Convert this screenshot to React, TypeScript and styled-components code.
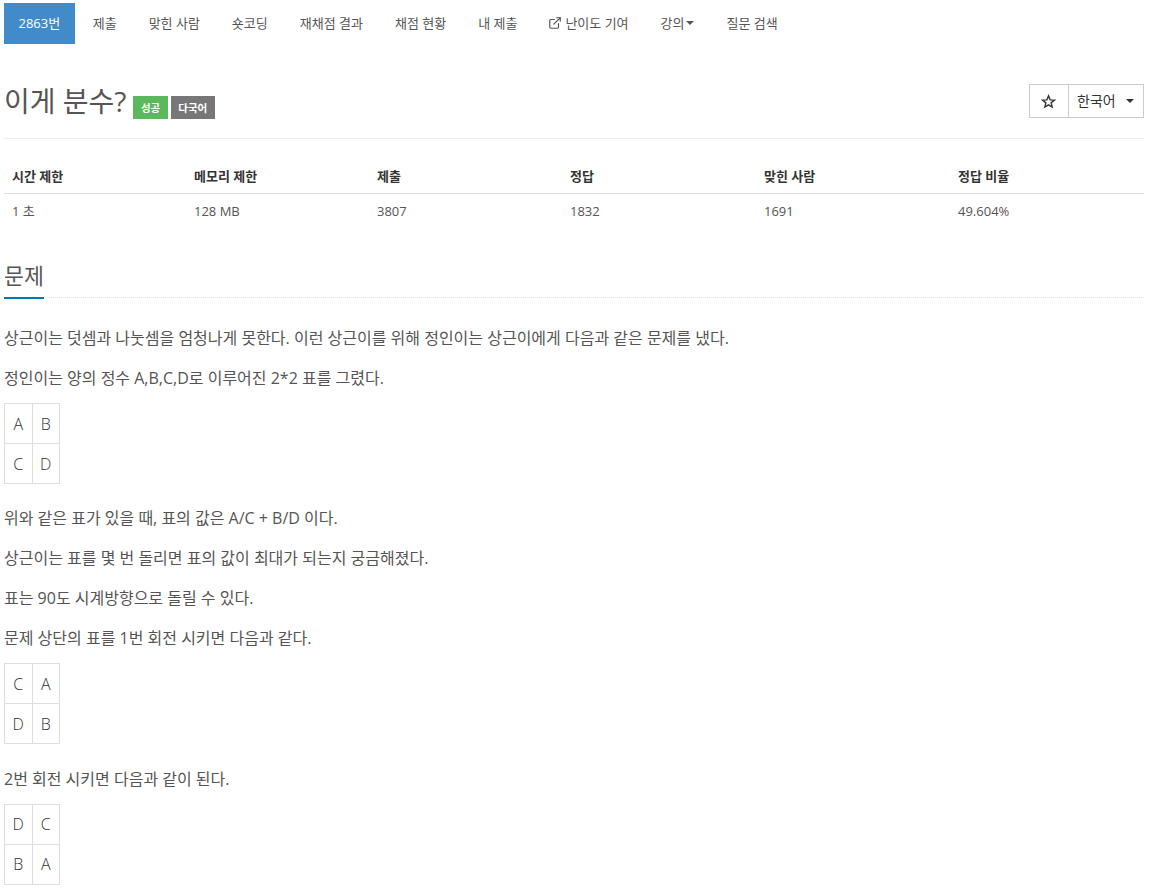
import React from "react";
import styled, { createGlobalStyle } from "styled-components";
import { ExternalLink } from "lucide-react";

const Global = createGlobalStyle`
  html, body { margin: 0; padding: 0; background: #fff; }
  body { font-family: "Open Sans", "Noto Sans CJK KR", sans-serif; color: #555; font-size: 13px; line-height: 20px; }
`;

const Page = styled.div`
  padding: 3px 5px 0 4px;
`;
const Nav = styled.nav`
  display: flex;
  gap: 2px;
  height: 41px;
`;
const NavItem = styled.a<{ $active?: boolean }>`
  display: flex;
  align-items: center;
  gap: 3px;
  box-sizing: border-box;
  height: 41px;
  padding: 0 ${(p) => (p.$active ? "14.5px" : "15px")} 2px;
  margin-right: ${(p) => (p.$active ? "1px" : "0")};
  font-size: 13px;
  color: ${(p) => (p.$active ? "#fff" : "#555")};
  background: ${(p) => (p.$active ? "#428bca" : "transparent")};
`;
const LinkIcon = styled(ExternalLink)`
  margin-left: -1px;
`;
const Caret = styled.span`
  width: 0;
  height: 0;
  border-top: 4px solid #555;
  border-left: 4px solid transparent;
  border-right: 4px solid transparent;
  margin: 0 1px 0 -2px;
`;
const Header = styled.header`
  display: flex;
  justify-content: space-between;
  margin-top: 40px;
  padding-bottom: 19px;
  border-bottom: 1px solid #eee;
  height: 35px;
`;
const TitleRow = styled.div`
  display: flex;
  align-items: flex-end;
`;
const Title = styled.h1`
  margin: 0;
  font-size: 28px;
  font-weight: 400;
  line-height: 36px;
  color: #555;
`;
const Label = styled.span<{ $bg: string }>`
  display: flex;
  align-items: center;
  justify-content: center;
  height: 23px;
  padding: 0 7.5px;
  margin-left: 3px;
  font-size: 10.5px;
  font-weight: 700;
  color: #fff;
  background: ${(p) => p.$bg};
`;
const FirstLabel = styled(Label)`
  margin-left: 7px;
`;
const ButtonGroup = styled.div`
  display: flex;
  height: 34px;
`;
const GroupButton = styled.div`
  display: flex;
  align-items: center;
  box-sizing: border-box;
  height: 34px;
  border: 1px solid #ccc;
  color: #333;
  font-size: 14px;
`;
const StarButton = styled(GroupButton)`
  width: 40px;
  padding-right: 2px;
  justify-content: center;
`;
const LangButton = styled(GroupButton)`
  width: 76px;
  margin-left: -1px;
  padding-left: 8px;
  gap: 10px;
`;
const DarkCaret = styled(Caret)`
  border-top-color: #333;
  margin: 0;
`;
const Stats = styled.table`
  width: 100%;
  margin-top: 20px;
  border-collapse: collapse;
  table-layout: fixed;
  font-size: 13px;
`;
const Th = styled.th<{ $w: number }>`
  box-sizing: border-box;
  width: ${(p) => p.$w}px;
  text-align: left;
  padding: 7px 8px 7px;
  color: #333;
  font-weight: 700;
  border-bottom: 1px solid #ddd;
`;
const Td = styled.td`
  padding: 7px 8px 8px;
  color: #555;
`;
const SectionHead = styled.div`
  margin-top: 32px;
  height: 36px;
  border-bottom: 1px dotted #e4e4e4;
`;
const SectionTitle = styled.h2`
  display: inline-block;
  margin: 0;
  box-sizing: border-box;
  height: 38px;
  line-height: 30px;
  font-size: 21.7px;
  font-weight: 400;
  color: #555;
  border-bottom: 2px solid #0076c0;
`;
const Body = styled.div`
  margin-top: 28px;
  font-size: 16px;
  line-height: 24px;
  color: #555;
`;
const P = styled.p`
  margin: 0 0 16px;
`;
const Grid = styled.table`
  border-collapse: collapse;
  margin: -3px 0 22.4px;
  font-size: 16px;
  font-weight: 300;
  color: #333;
`;
const Cell = styled.td`
  box-sizing: border-box;
  width: 27.5px;
  height: 40px;
  padding: 0;
  text-align: center;
  border: 1px solid #ddd;
`;

const navItems = ["제출", "맞힌 사람", "숏코딩", "재채점 결과", "채점 현황", "내 제출"];
const stats: [string, string, number][] = [
  ["시간 제한", "1 초", 182],
  ["메모리 제한", "128 MB", 183],
  ["제출", "3807", 193],
  ["정답", "1832", 194],
  ["맞힌 사람", "1691", 194],
  ["정답 비율", "49.604%", 194],
];

const Matrix = ({ rows }: { rows: string[][] }) => (
  <Grid>
    <tbody>
      {rows.map((r) => (
        <tr key={r.join("")}>
          {r.map((c) => (
            <Cell key={c}>{c}</Cell>
          ))}
        </tr>
      ))}
    </tbody>
  </Grid>
);

export default function App() {
  return (
    <Page>
      <Global />
      <Nav>
        <NavItem $active>2863번</NavItem>
        {navItems.map((n) => (
          <NavItem key={n}>{n}</NavItem>
        ))}
        <NavItem>
          <LinkIcon size={14} strokeWidth={2} />
          난이도 기여
        </NavItem>
        <NavItem>
          강의
          <Caret />
        </NavItem>
        <NavItem>질문 검색</NavItem>
      </Nav>
      <Header>
        <TitleRow>
          <Title>이게 분수?</Title>
          <FirstLabel $bg="#5cb85c">성공</FirstLabel>
          <Label $bg="#777">다국어</Label>
        </TitleRow>
        <ButtonGroup>
          <StarButton>
            <svg width="15" height="15" viewBox="0 0 24 24" fill="none" stroke="#333" strokeWidth="2.2" strokeLinejoin="miter">
              <polygon points="12,3 14.6,9.3 21.5,9.8 16.2,14.2 17.9,21 12,17.3 6.1,21 7.8,14.2 2.5,9.8 9.4,9.3" />
            </svg>
          </StarButton>
          <LangButton>
            한국어
            <DarkCaret />
          </LangButton>
        </ButtonGroup>
      </Header>
      <Stats>
        <thead>
          <tr>
            {stats.map(([h, , w]) => (
              <Th key={h} $w={w}>{h}</Th>
            ))}
          </tr>
        </thead>
        <tbody>
          <tr>
            {stats.map(([h, v]) => (
              <Td key={h}>{v}</Td>
            ))}
          </tr>
        </tbody>
      </Stats>
      <SectionHead>
        <SectionTitle>문제</SectionTitle>
      </SectionHead>
      <Body>
        <P>상근이는 덧셈과 나눗셈을 엄청나게 못한다. 이런 상근이를 위해 정인이는 상근이에게 다음과 같은 문제를 냈다.</P>
        <P>정인이는 양의 정수 A,B,C,D로 이루어진 2*2 표를 그렸다.</P>
        <Matrix rows={[["A", "B"], ["C", "D"]]} />
        <P>위와 같은 표가 있을 때, 표의 값은 A/C + B/D 이다.</P>
        <P>상근이는 표를 몇 번 돌리면 표의 값이 최대가 되는지 궁금해졌다.</P>
        <P>표는 90도 시계방향으로 돌릴 수 있다.</P>
        <P>문제 상단의 표를 1번 회전 시키면 다음과 같다.</P>
        <Matrix rows={[["C", "A"], ["D", "B"]]} />
        <P>2번 회전 시키면 다음과 같이 된다.</P>
        <Matrix rows={[["D", "C"], ["B", "A"]]} />
      </Body>
    </Page>
  );
}
